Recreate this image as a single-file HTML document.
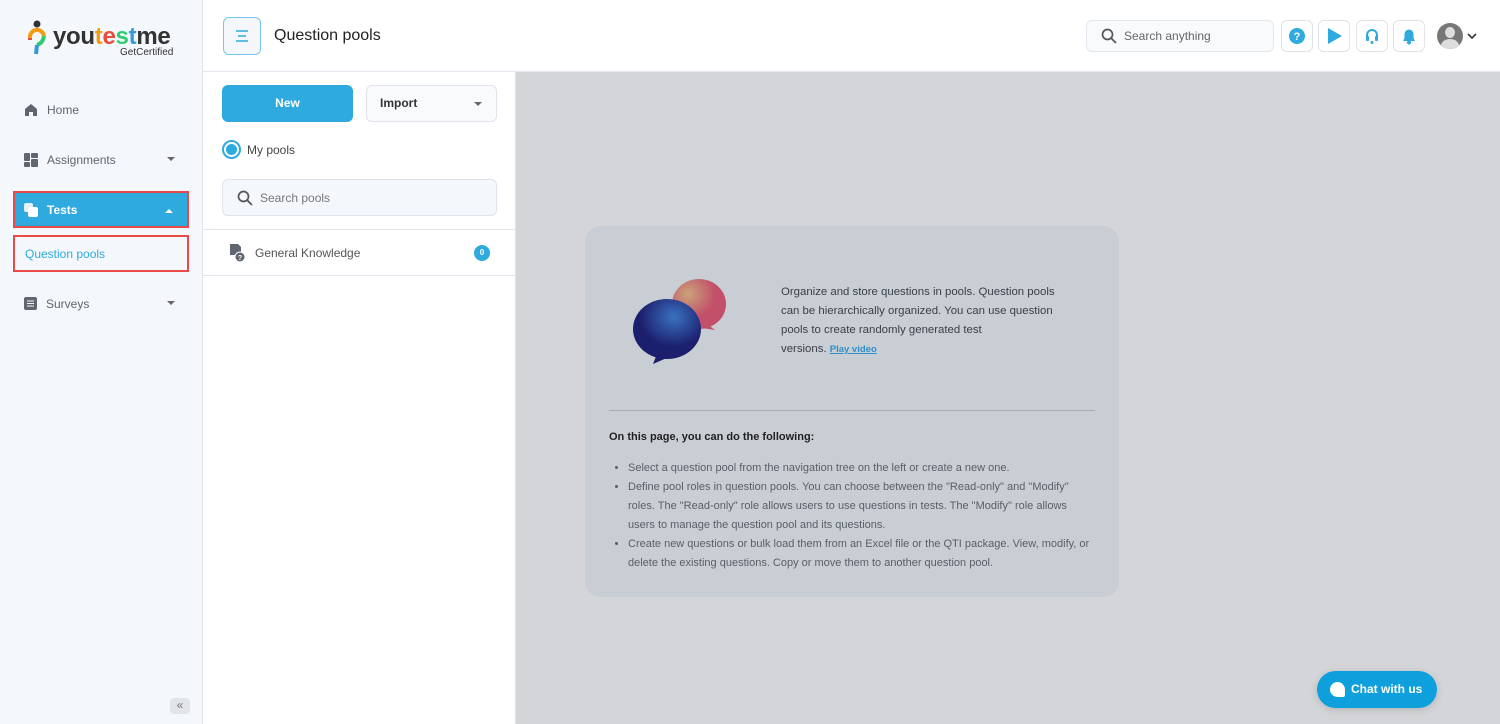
<!DOCTYPE html>
<html><head><meta charset="utf-8"><style>
*{box-sizing:border-box;margin:0;padding:0}
body{width:1500px;height:724px;overflow:hidden;font-family:"Liberation Sans",sans-serif;background:#d4d5d8;position:relative;color:#333}
.sb{position:absolute;left:0;top:0;width:203px;height:724px;background:#f4f7fc;border-right:1px solid #e1e6ee}
.hdr{position:absolute;left:203px;top:0;right:0;height:72px;background:#fff;border-bottom:1px solid #e1e6ee}
.mid{position:absolute;left:203px;top:72px;width:313px;height:652px;background:#fff;border-right:1px solid #e1e6ee}
.nav{position:absolute;left:13px;width:176px;height:37px;display:flex;align-items:center;font-size:12px;color:#5f6670}
.nav svg{margin-left:11px;margin-right:9px}
.car{position:absolute;right:14px;top:16px;width:0;height:0;border-left:4px solid transparent;border-right:4px solid transparent;border-top:4px solid #666}
.ib{position:absolute;top:20px;width:32px;height:32px;border:1px solid #dfe3ea;border-radius:6px;background:#fff;display:flex;align-items:center;justify-content:center}
.card{position:absolute;left:585px;top:226px;width:534px;height:371px;background:#c9cdd4;border-radius:16px}
ul li{margin-left:19px}
</style></head><body>
<div class="sb">
  <div style="position:absolute;left:28px;top:20px;width:18px;height:38px">
    <svg width="18" height="38" viewBox="0 0 18 38"><circle cx="9" cy="4" r="3.5" fill="#333"/><path d="M2 18 A7 7 0 0 1 16 16" stroke="#f39c12" stroke-width="4" fill="none"/><path d="M2 18 L2 20" stroke="#e74c3c" stroke-width="4"/><path d="M16 16 Q15 23 9 25" stroke="#2ecc71" stroke-width="4" fill="none"/><path d="M9 25 L8 34" stroke="#3498db" stroke-width="4"/></svg>
  </div>
  <div style="position:absolute;left:53px;top:23px;font-size:24px;font-weight:bold;letter-spacing:-0.3px;color:#333">you<span style="color:#f39c12">t</span><span style="color:#e74c3c">e</span><span style="color:#2ecc71">s</span><span style="color:#3498db">t</span>me</div>
  <div style="position:absolute;left:120px;top:47px;font-size:10px;color:#333">GetCertified</div>
  <div class="nav" style="top:91px"><svg width="14" height="14" viewBox="0 0 14 14"><path d="M1 6 L7 1 L13 6 V13 H9 V9 H5 V13 H1Z" fill="#5f6670"/></svg>Home</div>
  <div class="nav" style="top:141px"><svg width="14" height="14" viewBox="0 0 14 14"><rect x="0" y="0" width="6" height="8" rx="1" fill="#5f6670"/><rect x="7" y="0" width="7" height="5" rx="1" fill="#5f6670"/><rect x="0" y="9" width="6" height="5" rx="1" fill="#5f6670"/><rect x="7" y="6" width="7" height="8" rx="1" fill="#5f6670"/></svg>Assignments<div class="car"></div></div>
  <div class="nav" style="top:191px;background:#2eaade;border:2px solid #e84a4a;color:#fff;font-weight:bold"><svg width="14" height="14" viewBox="0 0 14 14" style="margin-left:9px"><rect x="0" y="0" width="9" height="9" rx="2" fill="#e0f1fa"/><rect x="4" y="4" width="10" height="10" rx="2" fill="#fff"/></svg>Tests<div class="car" style="border-top:none;border-bottom:4px solid #fff"></div></div>
  <div class="nav" style="top:235px;border:2px solid #e84a4a;color:#2eaade;padding-left:10px">Question pools</div>
  <div class="nav" style="top:285px"><svg width="13" height="13" viewBox="0 0 13 13"><rect width="13" height="13" rx="2" fill="#5f6670"/><path d="M3 4H10M3 6.5H10M3 9H10" stroke="#f4f7fc" stroke-width="1"/></svg>Surveys<div class="car"></div></div>
  <div style="position:absolute;left:170px;top:698px;width:20px;height:16px;background:#e1e4e9;border-radius:4px;font-size:12px;color:#777;text-align:center;line-height:15px">«</div>
</div>
<div class="hdr">
  <div style="position:absolute;left:20px;top:17px;width:38px;height:38px;border:1px solid #7cc5ea;border-radius:6px;background:#f4f7fc">
    <svg width="36" height="36" viewBox="0 0 36 36"><path d="M12 13H24M14 18H22M12 23H24" stroke="#2eaade" stroke-width="1.6"/></svg></div>
  <div style="position:absolute;left:71px;top:27px;font-size:16px;color:#222">Question pools</div>
  <div style="position:absolute;left:883px;top:20px;width:188px;height:32px;border:1px solid #e1e6ee;border-radius:6px;background:#f8fafc">
    <svg width="16" height="16" viewBox="0 0 16 16" style="position:absolute;left:14px;top:7px"><circle cx="6.5" cy="6.5" r="5" stroke="#555" stroke-width="1.7" fill="none"/><path d="M10 10L15 15" stroke="#555" stroke-width="1.8"/></svg>
    <span style="position:absolute;left:37px;top:8px;font-size:12px;color:#666">Search anything</span></div>
</div>
<div class="ib" style="left:1281px"><svg width="18" height="18"><circle cx="9" cy="9" r="8" fill="#2eaade"/><text x="9" y="13" font-size="11" font-weight="bold" fill="#fff" text-anchor="middle" font-family="Liberation Sans">?</text></svg></div>
<div class="ib" style="left:1318px"><svg width="18" height="18"><path d="M3 1L17 9L3 17Z" fill="#2eaade"/></svg></div>
<div class="ib" style="left:1356px"><svg width="18" height="18"><path d="M4 10V8A5 5 0 0 1 14 8V10" stroke="#2eaade" stroke-width="2" fill="none"/><rect x="3" y="9" width="3" height="5" rx="1" fill="#2eaade"/><rect x="12" y="9" width="3" height="5" rx="1" fill="#2eaade"/><circle cx="9" cy="15.5" r="1.5" fill="#2eaade"/></svg></div>
<div class="ib" style="left:1393px"><svg width="18" height="18"><path d="M3 14H15L13.5 11V7A4.5 4.5 0 0 0 4.5 7V11Z" fill="#2eaade"/><circle cx="9" cy="15.5" r="2" fill="#2eaade"/></svg></div>
<div style="position:absolute;left:1437px;top:23px;width:26px;height:26px;border-radius:50%;background:#777;overflow:hidden"><div style="position:absolute;left:8px;top:4px;width:10px;height:11px;border-radius:50%;background:#ddd"></div><div style="position:absolute;left:4px;top:16px;width:18px;height:14px;border-radius:50%;background:#ddd"></div></div>
<svg style="position:absolute;left:1467px;top:33px" width="10" height="7"><path d="M1 1L5 5L9 1" stroke="#333" stroke-width="1.6" fill="none"/></svg>
<div class="mid">
  <div style="position:absolute;left:19px;top:13px;width:131px;height:37px;background:#2eaade;border-radius:6px;color:#fff;font-weight:bold;font-size:12px;text-align:center;line-height:37px">New</div>
  <div style="position:absolute;left:163px;top:13px;width:131px;height:37px;background:#f8fafc;border:1px solid #dfe3ea;border-radius:6px;font-size:12px;font-weight:bold;color:#333;line-height:35px;padding-left:13px">Import<div class="car" style="top:16px;right:14px"></div></div>
  <div style="position:absolute;left:19px;top:68px;width:19px;height:19px;border:2px solid #2eaade;border-radius:50%"><div style="position:absolute;left:2px;top:2px;width:11px;height:11px;background:#2eaade;border-radius:50%"></div></div>
  <div style="position:absolute;left:44px;top:71px;font-size:12px;color:#444">My pools</div>
  <div style="position:absolute;left:19px;top:107px;width:275px;height:37px;background:#f4f7fc;border:1px solid #dfe3ea;border-radius:6px">
    <svg width="16" height="16" viewBox="0 0 16 16" style="position:absolute;left:14px;top:10px"><circle cx="6.5" cy="6.5" r="5" stroke="#555" stroke-width="1.7" fill="none"/><path d="M10 10L15 15" stroke="#555" stroke-width="1.8"/></svg>
    <span style="position:absolute;left:37px;top:11px;font-size:12px;color:#777">Search pools</span></div>
  <div style="position:absolute;left:0;top:157px;width:312px;height:47px;border-top:1px solid #e1e6ee;border-bottom:1px solid #e1e6ee">
    <svg width="18" height="20" viewBox="0 0 18 20" style="position:absolute;left:26px;top:13px"><path d="M1 1H9L12 4V12H1Z" fill="#5f6670"/><circle cx="11" cy="14" r="5" fill="#5f6670" stroke="#fff" stroke-width="1"/><text x="11" y="17" font-size="7" fill="#fff" text-anchor="middle" font-weight="bold" font-family="Liberation Sans">?</text></svg>
    <span style="position:absolute;left:52px;top:16px;font-size:12px;color:#555">General Knowledge</span>
    <div style="position:absolute;left:271px;top:15px;width:16px;height:16px;border-radius:50%;background:#2eaade;color:#fff;font-size:8px;font-weight:bold;text-align:center;line-height:16px">0</div>
  </div>
</div>
<div class="card">
  <svg width="110" height="100" viewBox="0 0 110 100" style="position:absolute;left:42px;top:48px">
    <defs><radialGradient id="r" cx="0.3" cy="0.3"><stop offset="0" stop-color="#c9a37a"/><stop offset="1" stop-color="#c2506a"/></radialGradient>
    <radialGradient id="b" cx="0.6" cy="0.3"><stop offset="0" stop-color="#3a72c0"/><stop offset="1" stop-color="#1c1f6e"/></radialGradient></defs>
    <ellipse cx="72" cy="30" rx="27" ry="25" fill="url(#r)"/><path d="M80 50 L88 56 L75 54Z" fill="#c2506a"/>
    <ellipse cx="40" cy="55" rx="34" ry="30" fill="url(#b)"/><path d="M30 80 L26 90 L42 83Z" fill="#1c1f6e"/>
  </svg>
  <div style="position:absolute;left:196px;top:57px;white-space:nowrap;font-size:11.4px;line-height:19px;color:#3a3f47">Organize and store questions in pools. Question pools<br>can be hierarchically organized. You can use question<br>pools to create randomly generated test<br>versions. <span style="color:#2e8fc8;text-decoration:underline;font-size:9.5px;font-weight:bold">Play video</span></div>
  <div style="position:absolute;left:24px;top:184px;width:486px;border-top:1px solid #a9adb4"></div>
  <div style="position:absolute;left:24px;top:205px;font-size:11px;font-weight:bold;color:#222">On this page, you can do the following:</div>
  <ul style="position:absolute;left:24px;top:233px;white-space:nowrap;font-size:11px;line-height:19px;color:#5a5f67">
    <li>Select a question pool from the navigation tree on the left or create a new one.</li>
    <li>Define pool roles in question pools. You can choose between the "Read-only" and "Modify"<br>roles. The "Read-only" role allows users to use questions in tests. The "Modify" role allows<br>users to manage the question pool and its questions.</li>
    <li>Create new questions or bulk load them from an Excel file or the QTI package. View, modify, or<br>delete the existing questions. Copy or move them to another question pool.</li>
  </ul>
</div>
<div style="position:absolute;left:1317px;top:671px;width:120px;height:37px;border-radius:19px;background:#0ea0dc;color:#fff;font-weight:bold;font-size:12px;line-height:37px;padding-left:34px;box-shadow:0 2px 8px rgba(0,0,0,.15)">Chat with us
  <div style="position:absolute;left:13px;top:11px;width:15px;height:15px;background:#fff;border-radius:50% 50% 2px 50%"></div></div>
</body></html>
